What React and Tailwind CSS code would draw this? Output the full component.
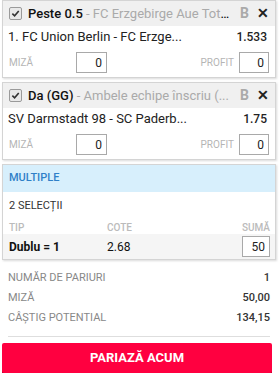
const bets = [
  { pick: 'Peste 0.5', market: 'FC Erzgebirge Aue Tot...', match: '1. FC Union Berlin - FC Erzge...', odds: '1.533' },
  { pick: 'Da (GG)', market: 'Ambele echipe înscriu (...', match: 'SV Darmstadt 98 - SC Paderb...', odds: '1.75' },
]

const summary = [
  ['NUMĂR DE PARIURI', '1'],
  ['MIZĂ', '50,00'],
  ['CÂȘTIG POTENTIAL', '134,15'],
]

const Check = () => (
  <span className="flex h-[13px] w-[13px] items-center justify-center rounded-[2px] border border-[#9a9a9a] bg-[#e9e9e9]">
    <svg viewBox="0 0 10 10" className="h-[9px] w-[9px]">
      <path d="M1.5 5.2 L4 7.6 L8.6 2.2" fill="none" stroke="#333" strokeWidth="1.8" />
    </svg>
  </span>
)

const StakeBox = ({ value, className = '' }) => (
  <div className={`flex h-[21px] items-center justify-end border border-[#a9a9a9] bg-white pr-[4px] text-[12px] text-[#222] ${className}`}>
    {value}
  </div>
)

const BetCard = ({ bet }) => (
  <div className="border border-[#d4d4d4] bg-white shadow-[1px_1px_2px_rgba(0,0,0,0.15)]">
    <div className="flex h-[25px] items-center bg-[#f0f0f0] pl-[6px] pr-[6px]">
      <Check />
      <div className="ml-[6px] flex-1 truncate text-[13px]">
        <span className="font-medium text-[#111]">{bet.pick}</span>
        <span className="text-[#aaa]"> - {bet.market}</span>
      </div>
      <span className="ml-[10px] text-[14px] font-bold text-[#aaa]">B</span>
      <span className="ml-[8px] text-[14px] font-bold text-[#222]">✕</span>
    </div>
    <div className="flex h-[22px] items-center justify-between pl-[5px] pr-[8px] text-[13px] text-[#222]">
      <span>{bet.match}</span>
      <span className="text-[12px] font-medium">{bet.odds}</span>
    </div>
    <div className="flex h-[29px] items-center pl-[6px] pr-[6px]">
      <span className="w-[67px] text-[10px] text-[#b5b5b5]">MIZĂ</span>
      <StakeBox value="0" className="w-[31px]" />
      <span className="ml-auto mr-[5px] text-[10px] text-[#b5b5b5]">PROFIT</span>
      <StakeBox value="0" className="w-[30px]" />
    </div>
  </div>
)

export default function App() {
  return (
    <div className="w-[279px] bg-white pl-[2px] pr-[3px] font-['Roboto',sans-serif]">
      <div className="flex flex-col gap-[4px]">
        {bets.map(bet => (
          <BetCard key={bet.pick} bet={bet} />
        ))}
        <div className="border border-[#d4d4d4] bg-white shadow-[1px_1px_2px_rgba(0,0,0,0.15)]">
          <div className="flex h-[27px] items-center bg-[#d7effc] pl-[6px] text-[11px] font-medium text-[#2f80c8]">
            MULTIPLE
          </div>
          <div className="flex h-[28px] items-center pl-[6px] text-[11px] text-[#333]">2 SELECȚII</div>
          <div className="flex h-[14px] items-center pl-[6px] pr-[5px] text-[10px] font-medium text-[#bbb]">
            <span className="w-[98px]">TIP</span>
            <span>COTE</span>
            <span className="ml-auto">SUMĂ</span>
          </div>
          <div className="flex h-[25px] items-center bg-[#f5f5f5] pl-[6px] pr-[5px] text-[12px] text-[#111]">
            <span className="w-[98px] font-bold">Dublu = 1</span>
            <span>2.68</span>
            <StakeBox value="50" className="ml-auto w-[28px]" />
          </div>
        </div>
      </div>
      <div className="mt-[8px] flex flex-col px-[6px] text-[11px]">
        {summary.map(([label, value]) => (
          <div key={label} className="flex h-[20px] items-center justify-between">
            <span className="text-[#888]">{label}</span>
            <span className="font-medium text-[#333]">{value}</span>
          </div>
        ))}
      </div>
      <div className="mx-[6px] mt-[8px] border-t border-[#dedede]" />
      <button
        type="button"
        className="mt-[6px] flex h-[30px] w-[270px] items-center justify-center rounded-[2px] bg-[#ff0040] text-[13px] font-bold text-white shadow-[0_2px_0_#b0002c]"
      >
        PARIAZĂ ACUM
      </button>
    </div>
  )
}
